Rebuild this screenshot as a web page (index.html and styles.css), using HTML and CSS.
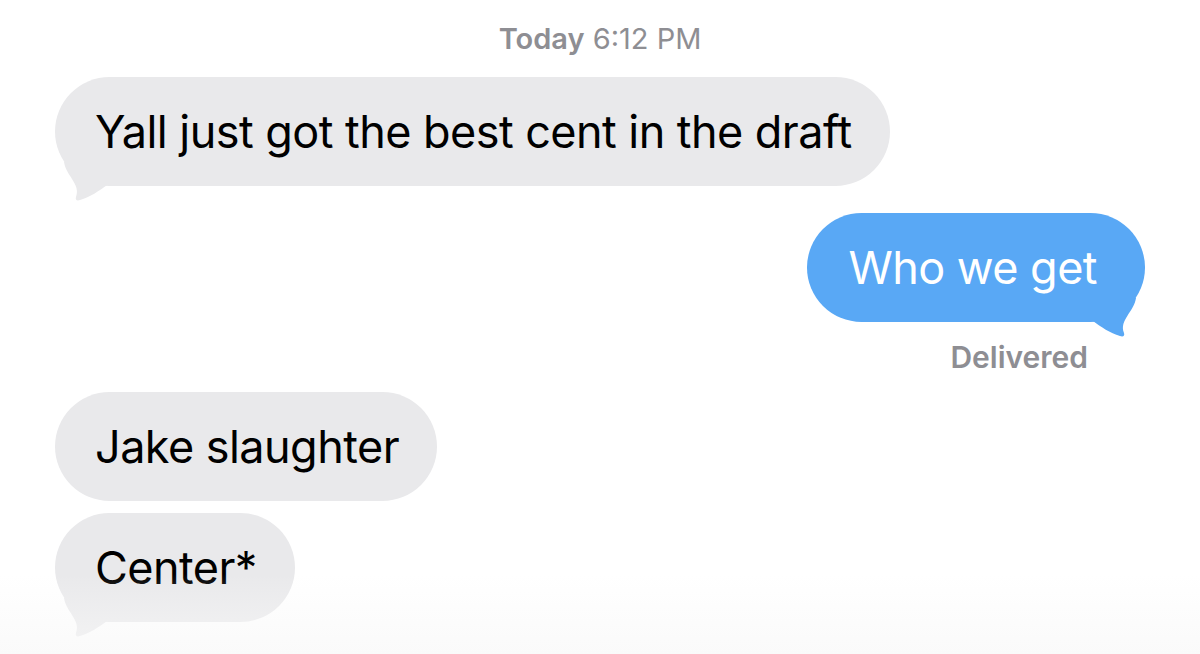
FILE: index.html
```html
<!DOCTYPE html>
<html lang="en">

<head>
    <meta charset="UTF-8">
    <meta name="viewport" content="width=device-width, initial-scale=1.0">
    <title>Messages</title>
    <link rel="stylesheet" href="styles.css">
</head>

<body>
    <div class="thread">
        <div class="stamp"><b>Today</b> 6:12 PM</div>

        <div class="bubble in first">
            Yall just got the best cent in the draft
            <svg class="tail" viewBox="0 0 60 40" width="60" height="40">
                <path d="M9 0 C11 14 26 22 21 35 C20 38 22 39 25 38 C35 35 44 29 52 23 L52 0 Z" />
            </svg>
        </div>

        <div class="bubble out">
            Who we get
            <svg class="tail" viewBox="0 0 60 40" width="60" height="40">
                <path d="M9 0 C11 14 26 22 21 35 C20 38 22 39 25 38 C35 35 44 29 52 23 L52 0 Z" />
            </svg>
        </div>
        <div class="status">Delivered</div>

        <div class="bubble in third">Jake slaughter</div>

        <div class="bubble in last">
            Center*
            <svg class="tail" viewBox="0 0 60 40" width="60" height="40">
                <path d="M9 0 C11 14 26 22 21 35 C20 38 22 39 25 38 C35 35 44 29 52 23 L52 0 Z" />
            </svg>
        </div>
    </div>
    <div class="input-fade"></div>
</body>

</html>
```

FILE: styles.css
```css
* {
    box-sizing: border-box;
    font-family: 'Inter', 'Noto Sans', sans-serif;
}

body {
    margin: 0;
    height: 654px;
    overflow: hidden;
    background-color: #fff;
    position: relative;
}

.thread {
    display: flex;
    flex-direction: column;
    padding: 0 55px;
}

.stamp {
    margin-top: 22px;
    text-align: center;
    font-size: 29px;
    line-height: 34px;
    color: #8e8e93;
}

.stamp b {
    font-weight: 600;
}

.bubble {
    position: relative;
    height: 109px;
    padding: 0 38px 0 40px;
    border-radius: 55px;
    font-size: 45px;
    letter-spacing: -0.55px;
    line-height: 109px;
    white-space: nowrap;
}

.bubble .tail {
    position: absolute;
    bottom: -16px;
    left: 0;
}

.bubble.in {
    align-self: flex-start;
    background-color: #e9e9eb;
    color: #000;
}

.bubble.in .tail path {
    fill: #e9e9eb;
}

.bubble.out {
    align-self: flex-end;
    margin-top: 27px;
    padding: 0 48px 0 41px;
    background-color: #59a8f5;
    color: #fff;
}

.bubble.out .tail {
    left: auto;
    right: 0;
    transform: scaleX(-1);
}

.bubble.out .tail path {
    fill: #59a8f5;
}

.bubble.first {
    margin-top: 21px;
}

.bubble.third {
    margin-top: 19px;
}

.bubble.last {
    margin-top: 12px;
}

.status {
    align-self: flex-end;
    margin-top: 19px;
    margin-right: 57px;
    font-size: 30px;
    font-weight: 600;
    line-height: 32px;
    color: #8e8e93;
}

.input-fade {
    position: absolute;
    left: 0;
    right: 0;
    bottom: 0;
    height: 80px;
    background: linear-gradient(rgba(250, 250, 250, 0), rgba(248, 248, 248, 0.7));
    pointer-events: none;
}
```
